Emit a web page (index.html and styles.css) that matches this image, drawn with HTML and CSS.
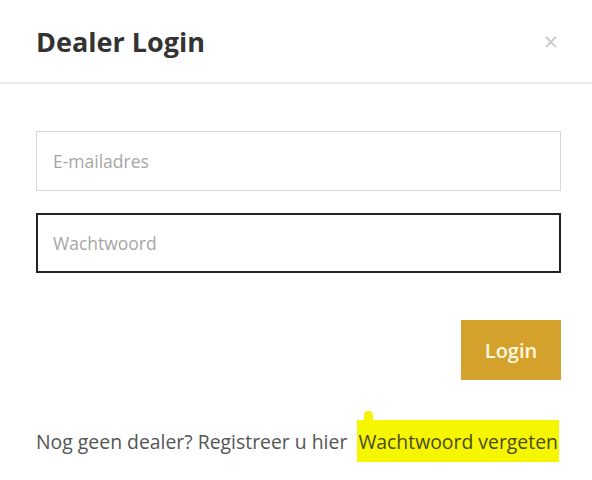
FILE: index.html
```html
<!DOCTYPE html>
<html lang="nl">
<head>
  <meta charset="UTF-8">
  <title>Dealer Login</title>
  <link rel="stylesheet" href="styles.css">
</head>
<body>
  <div class="modal">
    <div class="modal-header">
      <h2 class="modal-title">Dealer Login</h2>
      <button class="close" type="button">&times;</button>
    </div>
    <div class="modal-body">
      <input class="field" type="email" placeholder="E-mailadres">
      <input class="field field-active" type="password" placeholder="Wachtwoord">
      <div class="actions">
        <button class="btn-login" type="submit">Login</button>
      </div>
    </div>
    <div class="modal-footer">
      <p class="links">
        <a href="#" class="link">Nog geen dealer? Registreer u hier</a>
        <a href="#" class="link marked">Wachtwoord vergeten</a>
      </p>
    </div>
  </div>
</body>
</html>
```

FILE: styles.css
```css
body {
  margin: 0;
  background: #fff;
  font-family: "Open Sans", Arial, sans-serif;
  color: #333;
}
.modal {
  width: 592px;
  height: 480px;
  background: #fff;
}
.modal-header {
  display: flex;
  align-items: center;
  justify-content: space-between;
  box-sizing: border-box;
  height: 84px;
  padding: 0 34px 0 36px;
  border-bottom: 2px solid #e8e8e8;
}
.modal-title {
  margin: 0;
  font-size: 27px;
  font-weight: 700;
  color: #333;
}
.close {
  border: none;
  background: none;
  padding: 0;
  font-family: "Open Sans", Arial, sans-serif;
  font-size: 25px;
  line-height: 1;
  color: #c8c8c8;
  cursor: pointer;
}
.modal-body {
  padding: 47px 31px 0 36px;
  display: flex;
  flex-direction: column;
  gap: 22px;
}
.field {
  height: 60px;
  box-sizing: border-box;
  border: 1px solid #d8d8d8;
  padding: 0 16px;
  font-family: "Open Sans", Arial, sans-serif;
  font-size: 17.5px;
  color: #333;
  outline: none;
}
.field::placeholder {
  color: #a6a6a6;
}
.field-active {
  border: 2px solid #222;
  padding: 0 15px;
}
.actions {
  display: flex;
  justify-content: flex-end;
  margin-top: 25px;
}
.btn-login {
  width: 100px;
  height: 60px;
  border: none;
  background: #d4a22c;
  color: #fff8e0;
  font-family: "Open Sans", Arial, sans-serif;
  font-size: 20px;
  font-weight: 600;
  cursor: pointer;
}
.modal-footer {
  padding: 49px 31px 0 36px;
}
.links {
  margin: 0;
  font-size: 19.4px;
  line-height: 26px;
  white-space: nowrap;
}
.link {
  color: #555;
  text-decoration: none;
}
.marked {
  position: relative;
  margin-left: 5px;
  padding: 8px 1px 7px;
  color: #4a4a1a;
  background: #f6f600;
}
/* the highlighter stroke going up at the start */
.marked::before {
  content: "";
  position: absolute;
  left: 7px;
  top: -9px;
  width: 9px;
  height: 18px;
  border-radius: 4px 4px 0 0;
  background: #f6f600;
}
```
